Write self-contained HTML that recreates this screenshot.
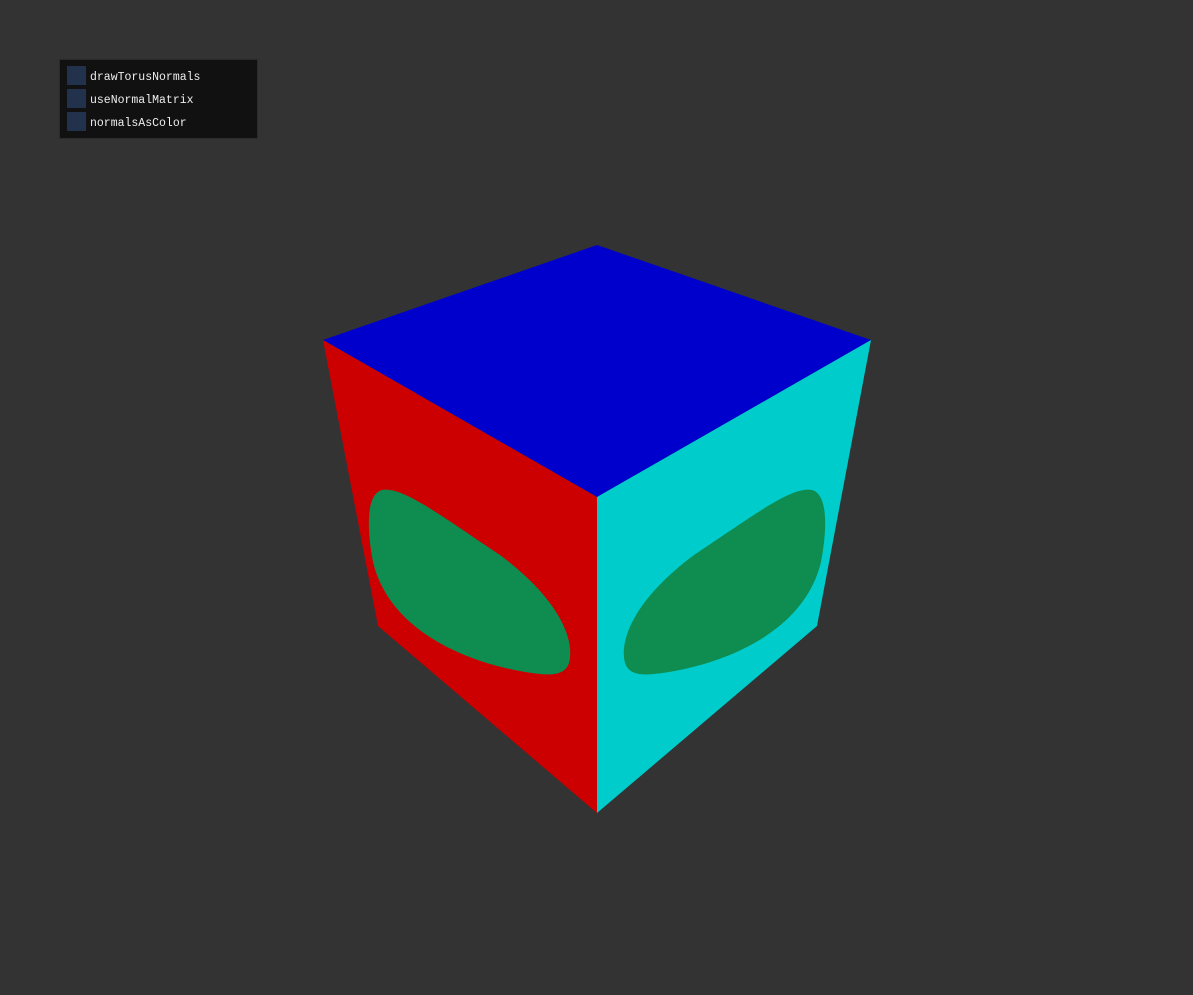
<!DOCTYPE html>
<html><head><style>
body{margin:0;width:1193px;height:995px;background:#333;overflow:hidden;position:relative;font-family:"Liberation Mono",monospace}
.p{position:absolute;left:59px;top:59px;width:197px;height:78px;background:#111;border:1px solid #2b2b2b}
.r{position:absolute;left:7px;height:19px;color:#eee;font-size:11.5px;line-height:19px}
.r i{display:inline-block;width:19px;height:19px;background:#22324d;vertical-align:top;margin-right:4px}
.r span{position:relative;top:2px}
</style></head><body>
<div class="p">
<div class="r" style="top:6px"><i></i><span>drawTorusNormals</span></div>
<div class="r" style="top:29px"><i></i><span>useNormalMatrix</span></div>
<div class="r" style="top:52px"><i></i><span>normalsAsColor</span></div>
</div>
<svg width="1193" height="995" style="position:absolute;left:0;top:0">
<polygon points="597,245 871,340 597,497 323,340" fill="#0000cc"/>
<polygon points="323,340 597,497 597,813 378,626" fill="#cc0000"/>
<polygon points="597,497 871,340 817,626 597,813" fill="#00cccc"/>
<path d="M382,490 C402,486 440,515 500,555 C560,600 575,640 569,663 C564,678 545,675 525,672 C455,660 388,625 373,562 C366,525 367,494 382,490 Z" fill="#0f8c50"/>
<path transform="translate(1194,0) scale(-1,1)" d="M382,490 C402,486 440,515 500,555 C560,600 575,640 569,663 C564,678 545,675 525,672 C455,660 388,625 373,562 C366,525 367,494 382,490 Z" fill="#0f8c50"/>
</svg>
</body></html>
